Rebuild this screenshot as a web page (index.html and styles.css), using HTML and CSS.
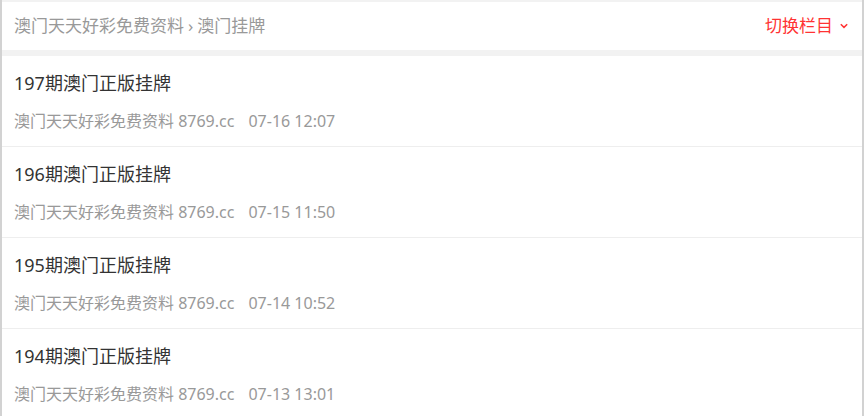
FILE: index.html
```html
<!DOCTYPE html>
<html lang="zh-CN">
<head>
<meta charset="utf-8">
<title>澳门挂牌</title>
<link rel="stylesheet" href="styles.css">
</head>
<body>
<div class="page">
  <header class="topbar">
    <div class="crumbs">澳门天天好彩免费资料<span class="sep">›</span>澳门挂牌</div>
    <div class="switch">切换栏目<svg class="chev" width="8" height="6" viewBox="0 0 8 6"><path d="M0.8 1.2 L4 4.4 L7.2 1.2" fill="none" stroke="#ff3333" stroke-width="1.5"/></svg></div>
  </header>
  <ul class="list">
    <li class="item">
      <div class="title">197期澳门正版挂牌</div>
      <div class="meta"><span>澳门天天好彩免费资料 8769.cc</span><span>07-16 12:07</span></div>
    </li>
    <li class="item">
      <div class="title">196期澳门正版挂牌</div>
      <div class="meta"><span>澳门天天好彩免费资料 8769.cc</span><span>07-15 11:50</span></div>
    </li>
    <li class="item">
      <div class="title">195期澳门正版挂牌</div>
      <div class="meta"><span>澳门天天好彩免费资料 8769.cc</span><span>07-14 10:52</span></div>
    </li>
    <li class="item">
      <div class="title">194期澳门正版挂牌</div>
      <div class="meta"><span>澳门天天好彩免费资料 8769.cc</span><span>07-13 13:01</span></div>
    </li>
  </ul>
</div>
</body>
</html>
```
FILE: styles.css
```css
html, body {
  margin: 0;
  padding: 0;
  height: 100%;
  overflow: hidden;
}
body {
  font-family: "Noto Sans", "Noto Sans CJK SC", sans-serif;
  background: #f2f2f2;
}
.page {
  box-sizing: border-box;
  min-height: 100%;
  border-left: 2px solid #d2d2d2;
  border-right: 2px solid #d2d2d2;
  background: #f2f2f2;
  padding-top: 2px;
}
.topbar {
  height: 48px;
  background: #fff;
  display: flex;
  align-items: center;
  justify-content: space-between;
  padding: 0 14px 0 12px;
  margin-bottom: 6px;
}
.crumbs {
  font-size: 17px;
  color: #999;
  line-height: 24px;
}
.sep {
  margin: 0 4px;
}
.switch {
  font-size: 17px;
  color: #ff3333;
  line-height: 24px;
  display: flex;
  align-items: center;
  gap: 7px;
}
.chev {
  display: block;
}
.list {
  list-style: none;
  margin: 0;
  padding: 0;
}
.item {
  background: #fff;
  height: 91px;
  box-sizing: border-box;
  padding: 15px 12px 0;
  border-bottom: 1px solid #eeeeee;
}
.item:last-child {
  border-bottom: none;
}
.title {
  font-size: 18px;
  line-height: 24px;
  color: #333;
}
.meta {
  margin-top: 15px;
  font-size: 16px;
  line-height: 22px;
  color: #999;
  display: flex;
  gap: 14px;
}
```
